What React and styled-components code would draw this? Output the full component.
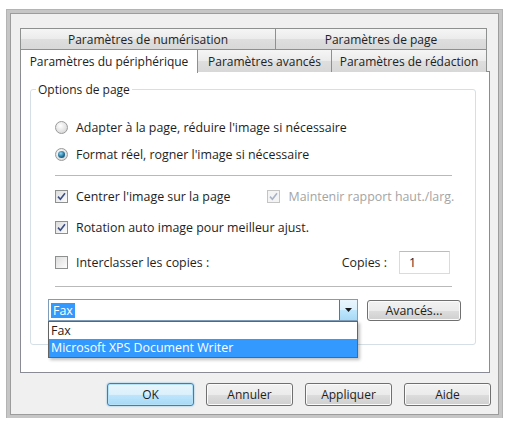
import React from 'react';
import styled, { createGlobalStyle, css } from 'styled-components';

const Global = createGlobalStyle`
  html, body { margin: 0; padding: 0; background: #ffffff; }
  body {
    font-family: "Open Sans", "Noto Sans", "Liberation Sans", sans-serif;
    font-size: 12px;
    color: #1e1e1e;
  }
  * { box-sizing: border-box; }
`;

const Window = styled.div`
  margin: 10px 0 0 7px;
  width: 495px;
  height: 408px;
  background: #f0f0f0;
  border: 3px solid #c6c6c6;
  box-shadow: 0 0 0 1px #b4b4b4, inset 0 0 0 1px #9c9c9c;
  padding: 15px 0 0 10px;
  display: flex;
  flex-direction: column;
`;

const TabRow = styled.div`
  display: flex;
  height: ${p => p.$h}px;
  position: relative;
  z-index: 1;
`;

const Tab = styled.div`
  width: ${p => p.$w}px;
  display: flex;
  align-items: center;
  justify-content: center;
  white-space: nowrap;
  border: 1px solid #8e8f8f;
  border-bottom: none;
  margin-left: -1px;
  &:first-child { margin-left: 0; }
  background: linear-gradient(#f5f5f5, #ebebeb 50%, #dedede 51%, #d8d8d8);
  color: #222;
  ${p => p.$active && css`
    background: #ffffff;
    height: 24px;
    padding-bottom: 1px;
    position: relative;
    z-index: 2;
  `}
`;

const Panel = styled.div`
  width: 470px;
  height: 302px;
  margin-top: -1px;
  background: #ffffff;
  border: 1px solid #898c95;
  padding: 9px 0 0 9px;
`;

const Group = styled.fieldset`
  width: 446px;
  margin: 0;
  padding: 0 0 23px 0;
  border: 1px solid #d5dfe5;
  border-radius: 3px;
  min-inline-size: 0;
`;

const Legend = styled.legend`
  margin-left: 5px;
  padding: 0 2px;
  line-height: 17px;
  color: #1e1e1e;
`;

const Content = styled.div`
  padding: 19px 0 0 24px;
  display: flex;
  flex-direction: column;
  font-size: 12.4px;
`;

const Row = styled.div`
  display: flex;
  align-items: center;
  width: 397px;
  height: ${p => p.$h || 20}px;
  margin-top: ${p => p.$mt || 0}px;
  white-space: nowrap;
`;

const Label = styled.span`
  margin-left: 8px;
  color: ${p => (p.$disabled ? '#a4a4a4' : '#1e1e1e')};
`;

const Separator = styled.div`
  width: 397px;
  height: 2px;
  margin-top: ${p => p.$mt}px;
  border-top: 1px solid #b9b9b9;
  border-bottom: 1px solid #ffffff;
`;

const RadioCircle = styled.span`
  width: 13px;
  height: 13px;
  border-radius: 50%;
  border: 1px solid #9a9a9a;
  background: radial-gradient(circle at 40% 35%, #ffffff, #dadada 75%, #cfcfcf);
  display: flex;
  align-items: center;
  justify-content: center;
  flex: none;
  &::after {
    content: '';
    display: ${p => (p.$checked ? 'block' : 'none')};
    width: 7px;
    height: 7px;
    border-radius: 50%;
    background: radial-gradient(circle at 40% 35%, #8fd6f5, #1f6f98 55%, #0c3f5c);
  }
`;

const CheckBox = styled.span`
  width: 13px;
  height: 13px;
  border: 1px solid ${p => (p.$disabled ? '#c4c4c4' : '#8e8f8f')};
  background: ${p => (p.$disabled ? '#f4f4f4' : 'linear-gradient(135deg, #dcdcdc, #fdfdfd)')};
  display: flex;
  align-items: center;
  justify-content: center;
  flex: none;
  padding: 1px;
`;

const Check = ({ disabled }) => (
  <svg width="9" height="9" viewBox="0 0 9 9">
    <path d="M1 4.6 L3.4 7.2 L8 1.3" fill="none" stroke={disabled ? '#a8b3c8' : '#3b4f86'} strokeWidth="1.6" />
  </svg>
);

const Radio = ({ checked, children }) => (
  <>
    <RadioCircle $checked={checked} />
    <Label>{children}</Label>
  </>
);

const Checkbox = ({ checked, disabled, children }) => (
  <>
    <CheckBox $disabled={disabled}>{checked && <Check disabled={disabled} />}</CheckBox>
    <Label $disabled={disabled}>{children}</Label>
  </>
);

const Spacer = styled.span`
  width: ${p => p.$w}px;
  flex: none;
`;

const CopiesLabel = styled.span`
  margin-left: auto;
`;

const NumberInput = styled.div`
  width: 51px;
  height: 23px;
  margin: 0 2px 0 12px;
  border: 1px solid #d9dbe0;
  border-top-color: #b9bcc4;
  background: #ffffff;
  padding-left: 9px;
  display: flex;
  align-items: center;
`;

const ComboRow = styled.div`
  display: flex;
  align-items: center;
  margin-top: 11px;
  margin-left: -7px;
  height: 22px;
`;

const Combo = styled.div`
  position: relative;
  width: 310px;
  height: 22px;
  border: 1px solid #7f9db9;
  background: #ffffff;
  display: flex;
  align-items: center;
  padding-left: 2px;
`;

const Selected = styled.span`
  background: #3399ff;
  color: #ffffff;
  padding: 0 2px;
  line-height: 15px;
`;

const DropButton = styled.div`
  margin-left: auto;
  width: 18px;
  height: 20px;
  border-left: 1px solid #3c7fb1;
  background: linear-gradient(#eaf6fd, #d9f0fc 50%, #bee6fd 51%, #a7d9f5);
  display: flex;
  align-items: center;
  justify-content: center;
`;

const ListBox = styled.div`
  position: absolute;
  top: 21px;
  left: -1px;
  width: 310px;
  background: #ffffff;
  border: 1px solid #646464;
  box-shadow: 2px 2px 3px rgba(0, 0, 0, 0.25);
  z-index: 5;
`;

const ListItem = styled.div`
  height: ${p => p.$h}px;
  line-height: ${p => p.$h}px;
  padding-left: 2px;
  white-space: nowrap;
  ${p => p.$selected && css`
    background: #3399ff;
    color: #ffffff;
  `}
`;

const Button = styled.div`
  width: ${p => p.$w || 87}px;
  height: ${p => p.$h || 23}px;
  margin-left: ${p => p.$ml || 0}px;
  border: 1px solid #707070;
  border-radius: 3px;
  background: linear-gradient(#f2f2f2, #ebebeb 50%, #dddddd 51%, #cfcfcf);
  box-shadow: inset 0 0 0 1px #fbfbfb;
  display: flex;
  align-items: center;
  justify-content: center;
  color: #1e1e1e;
  ${p => p.$default && css`
    border-color: #3c7fb1;
    background: linear-gradient(#eaf6fd, #d9f0fc 50%, #bee6fd 51%, #a7d9f5);
    box-shadow: inset 0 0 0 1px #b6e1f7, 0 0 2px #6ab7e0;
  `}
`;

const Footer = styled.div`
  display: flex;
  justify-content: flex-end;
  gap: 12px;
  width: 471px;
  margin-top: 10px;
`;

export default function App() {
  return (
    <>
      <Global />
      <Window>
        <TabRow $h={21}>
          <Tab $w={256}>Paramètres de numérisation</Tab>
          <Tab $w={212}>Paramètres de page</Tab>
        </TabRow>
        <TabRow $h={23}>
          <Tab $w={178} $active>Paramètres du périphérique</Tab>
          <Tab $w={135}>Paramètres avancés</Tab>
          <Tab $w={156}>Paramètres de rédaction</Tab>
        </TabRow>
        <Panel>
          <Group>
            <Legend>Options de page</Legend>
            <Content>
              <Row>
                <Radio>Adapter à la page, réduire l'image si nécessaire</Radio>
              </Row>
              <Row $mt={7}>
                <Radio checked>Format réel, rogner l'image si nécessaire</Radio>
              </Row>
              <Separator $mt={11} />
              <Row $mt={9}>
                <Checkbox checked>Centrer l'image sur la page</Checkbox>
                <Spacer $w={37} />
                <Checkbox checked disabled>Maintenir rapport haut./larg.</Checkbox>
              </Row>
              <Row $mt={11}>
                <Checkbox checked>Rotation auto image pour meilleur ajust.</Checkbox>
              </Row>
              <Row $mt={14} $h={23}>
                <Checkbox>Interclasser les copies :</Checkbox>
                <CopiesLabel>Copies :</CopiesLabel>
                <NumberInput>1</NumberInput>
              </Row>
              <Separator $mt={12} />
              <ComboRow>
                <Combo>
                  <Selected>Fax</Selected>
                  <DropButton>
                    <svg width="7" height="4" viewBox="0 0 7 4">
                      <path d="M0 0 H7 L3.5 4 Z" fill="#1a1a1a" />
                    </svg>
                  </DropButton>
                  <ListBox>
                    <ListItem $h={17}>Fax</ListItem>
                    <ListItem $h={18} $selected>Microsoft XPS Document Writer</ListItem>
                  </ListBox>
                </Combo>
                <Button $w={94} $h={21} $ml={9}>Avancés...</Button>
              </ComboRow>
            </Content>
          </Group>
        </Panel>
        <Footer>
          <Button $default>OK</Button>
          <Button>Annuler</Button>
          <Button>Appliquer</Button>
          <Button>Aide</Button>
        </Footer>
      </Window>
    </>
  );
}
